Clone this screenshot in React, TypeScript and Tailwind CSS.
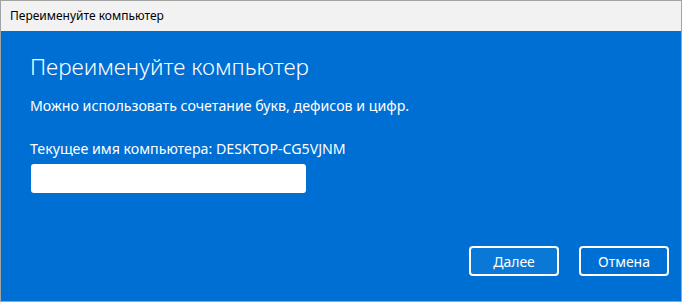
export default function App() {
  return (
    <div
      className="flex h-[302px] w-[682px] flex-col border border-[#a3a3a3] bg-[#006fd4]"
      style={{ fontFamily: '"Noto Sans", "Open Sans", sans-serif' }}
    >
      <div className="flex h-[30px] shrink-0 items-center bg-[#f2f2f2] pl-[9px] text-[12px] text-black">
        Переименуйте компьютер
      </div>

      <div className="flex flex-1 flex-col pl-[29px] pr-[12px] text-white">
        <h1 className="mt-[20px] text-[22.5px] font-light leading-[32px]">Переименуйте компьютер</h1>

        <p className="mt-[13px] text-[14.2px] leading-[20px]">
          Можно использовать сочетание букв, дефисов и цифр.
        </p>

        <p className="mt-[23px] text-[14.2px] leading-[20px]">
          Текущее имя компьютера: DESKTOP-CG5VJNM
        </p>

        <input
          type="text"
          className="mt-[5px] ml-[1px] h-[29px] w-[275px] rounded-[3px] bg-white px-2 text-[14px] text-black outline-none"
        />

        <div className="mt-auto mb-[25px] flex justify-end gap-[20px]">
          <button className="h-[30px] w-[90px] rounded-[4px] border-2 border-white bg-[#0a78d6] text-[14px] text-white">
            Далее
          </button>
          <button className="h-[30px] w-[90px] rounded-[4px] border-2 border-white text-[14px] text-white">
            Отмена
          </button>
        </div>
      </div>
    </div>
  );
}
